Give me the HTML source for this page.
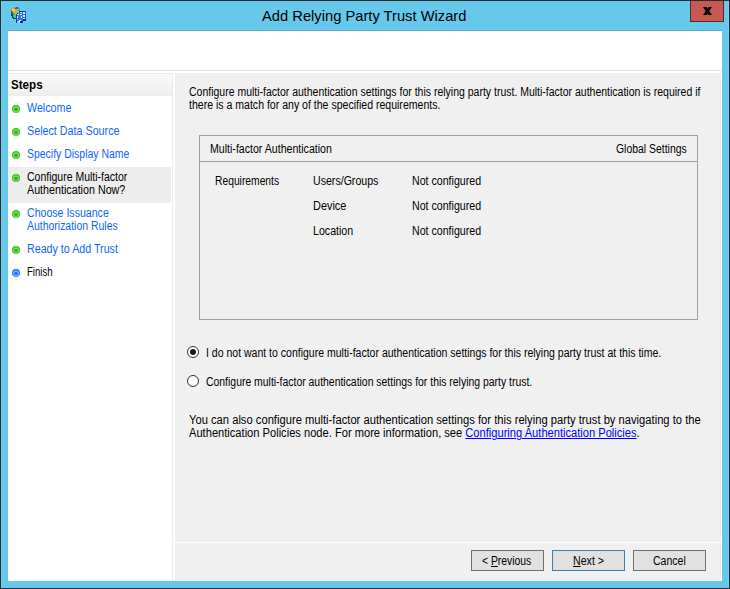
<!DOCTYPE html>
<html><head><meta charset="utf-8">
<style>
html,body{margin:0;padding:0;}
body{width:730px;height:589px;position:relative;overflow:hidden;background:#2b2b2b;font-family:"Liberation Sans",sans-serif;}
.a{position:absolute;}
.t{position:absolute;white-space:nowrap;font-size:12px;line-height:13px;color:#000;transform-origin:0 0;font-family:"Liberation Sans",sans-serif;}
.dot{position:absolute;left:12px;width:8px;height:8px;border-radius:50%;}
.dot.g{background:radial-gradient(circle at 50% 55%,#1fae10 0,#2ab818 1.2px,#8ddc6e 2.3px,#5fd040 3px,#38c416 3.6px);}
.dot.b{background:radial-gradient(circle at 50% 55%,#105ef0 0,#2a6cff 1.2px,#8cb8ff 2.3px,#5a94ff 3px,#1a66ff 3.6px);}
.lk{color:#0a66ff;}
.ul{color:#0000ff;text-decoration:underline;text-underline-offset:1px;}
.btn{position:absolute;top:550px;width:71px;height:19px;background:#e1e1e1;border:1px solid #707070;}
.radio{position:absolute;left:187px;width:10px;height:10px;border-radius:50%;border:1px solid #333;background:#fff;}
</style></head><body>
<div class="a" style="left:1px;top:1px;width:728px;height:587px;background:#66c8ea;"></div>
<!-- close -->
<div class="a" style="left:690px;top:1px;width:32px;height:20px;background:#c65a50;border:1px solid #5a2822;border-top:0;"></div>
<svg class="a" style="left:703px;top:7px" width="9" height="8" viewBox="0 0 9 8"><path d="M0 0 L3.7 0 L4.5 1.7 L5.3 0 L9 0 L6.3 4 L9 8 L5.3 8 L4.5 6.3 L3.7 8 L0 8 L2.7 4 Z" fill="#000"/></svg>
<!-- icon -->
<svg class="a" style="left:10px;top:7px" width="16" height="16" viewBox="0 0 16 16" shape-rendering="crispEdges"><rect x="4" y="0" width="2" height="1" fill="#4f9fe0"/><rect x="6" y="0" width="2" height="1" fill="#1f5fcf"/><rect x="8" y="0" width="1" height="1" fill="#4f9fe0"/><rect x="1" y="1" width="4" height="1" fill="#f2a01e"/><rect x="5" y="1" width="3" height="1" fill="#1f5fcf"/><rect x="8" y="1" width="2" height="1" fill="#4f9fe0"/><rect x="0" y="2" width="2" height="1" fill="#f2a01e"/><rect x="2" y="2" width="2" height="1" fill="#fbd27a"/><rect x="4" y="2" width="4" height="1" fill="#f2a01e"/><rect x="8" y="2" width="2" height="1" fill="#4f9fe0"/><rect x="0" y="3" width="1" height="1" fill="#f2a01e"/><rect x="1" y="3" width="1" height="1" fill="#1fb83a"/><rect x="2" y="3" width="3" height="1" fill="#fbd27a"/><rect x="5" y="3" width="3" height="1" fill="#f2a01e"/><rect x="8" y="3" width="1" height="1" fill="#4f9fe0"/><rect x="9" y="3" width="1" height="1" fill="#1fb83a"/><rect x="0" y="4" width="1" height="1" fill="#f2a01e"/><rect x="1" y="4" width="1" height="1" fill="#1f5fcf"/><rect x="2" y="4" width="1" height="1" fill="#1fb83a"/><rect x="3" y="4" width="1" height="1" fill="#fbd27a"/><rect x="4" y="4" width="4" height="1" fill="#f2a01e"/><rect x="9" y="4" width="7" height="1" fill="#0c3aa6"/><rect x="1" y="5" width="2" height="1" fill="#1f5fcf"/><rect x="3" y="5" width="4" height="1" fill="#f2a01e"/><rect x="9" y="5" width="1" height="1" fill="#1f5fcf"/><rect x="10" y="5" width="2" height="1" fill="#d6ebff"/><rect x="12" y="5" width="1" height="1" fill="#1f5fcf"/><rect x="13" y="5" width="2" height="1" fill="#d6ebff"/><rect x="15" y="5" width="1" height="1" fill="#1f5fcf"/><rect x="1" y="6" width="2" height="1" fill="#1f5fcf"/><rect x="3" y="6" width="1" height="1" fill="#1fb83a"/><rect x="4" y="6" width="2" height="1" fill="#f2a01e"/><rect x="7" y="6" width="1" height="1" fill="#0c3aa6"/><rect x="8" y="6" width="5" height="1" fill="#2f78de"/><rect x="13" y="6" width="2" height="1" fill="#d6ebff"/><rect x="15" y="6" width="1" height="1" fill="#1f5fcf"/><rect x="1" y="7" width="2" height="1" fill="#0c3aa6"/><rect x="3" y="7" width="2" height="1" fill="#1fb83a"/><rect x="6" y="7" width="1" height="1" fill="#0c3aa6"/><rect x="7" y="7" width="2" height="1" fill="#d6ebff"/><rect x="9" y="7" width="1" height="1" fill="#2f78de"/><rect x="10" y="7" width="2" height="1" fill="#d6ebff"/><rect x="12" y="7" width="1" height="1" fill="#2f78de"/><rect x="13" y="7" width="3" height="1" fill="#1f5fcf"/><rect x="1" y="8" width="2" height="1" fill="#0c3aa6"/><rect x="3" y="8" width="3" height="1" fill="#2ee04a"/><rect x="6" y="8" width="1" height="1" fill="#0c3aa6"/><rect x="7" y="8" width="6" height="1" fill="#2f78de"/><rect x="13" y="8" width="2" height="1" fill="#d6ebff"/><rect x="15" y="8" width="1" height="1" fill="#1f5fcf"/><rect x="2" y="9" width="1" height="1" fill="#0c3aa6"/><rect x="3" y="9" width="3" height="1" fill="#2ee04a"/><rect x="6" y="9" width="1" height="1" fill="#0c3aa6"/><rect x="7" y="9" width="1" height="1" fill="#d6ebff"/><rect x="8" y="9" width="3" height="1" fill="#2f78de"/><rect x="11" y="9" width="1" height="1" fill="#d6ebff"/><rect x="12" y="9" width="1" height="1" fill="#2f78de"/><rect x="13" y="9" width="2" height="1" fill="#d6ebff"/><rect x="15" y="9" width="1" height="1" fill="#1f5fcf"/><rect x="2" y="10" width="2" height="1" fill="#0c3aa6"/><rect x="4" y="10" width="2" height="1" fill="#2ee04a"/><rect x="6" y="10" width="1" height="1" fill="#0c3aa6"/><rect x="7" y="10" width="1" height="1" fill="#d6ebff"/><rect x="8" y="10" width="3" height="1" fill="#2f78de"/><rect x="11" y="10" width="1" height="1" fill="#d6ebff"/><rect x="12" y="10" width="1" height="1" fill="#2f78de"/><rect x="13" y="10" width="3" height="1" fill="#1f5fcf"/><rect x="3" y="11" width="3" height="1" fill="#0c3aa6"/><rect x="6" y="11" width="7" height="1" fill="#2f78de"/><rect x="13" y="11" width="2" height="1" fill="#d6ebff"/><rect x="15" y="11" width="1" height="1" fill="#1f5fcf"/><rect x="6" y="12" width="1" height="1" fill="#0c3aa6"/><rect x="7" y="12" width="1" height="1" fill="#8fc6f2"/><rect x="8" y="12" width="5" height="1" fill="#2f78de"/><rect x="13" y="12" width="3" height="1" fill="#0a2f8a"/><rect x="6" y="13" width="1" height="1" fill="#0c3aa6"/><rect x="7" y="13" width="2" height="1" fill="#2f78de"/><rect x="9" y="13" width="2" height="1" fill="#d6ebff"/><rect x="11" y="13" width="2" height="1" fill="#2f78de"/><rect x="13" y="13" width="3" height="1" fill="#0a2f8a"/><rect x="6" y="14" width="1" height="1" fill="#0c3aa6"/><rect x="7" y="14" width="2" height="1" fill="#8fc6f2"/><rect x="9" y="14" width="1" height="1" fill="#d6ebff"/><rect x="10" y="14" width="3" height="1" fill="#0a2f8a"/><rect x="6" y="15" width="1" height="1" fill="#0c3aa6"/><rect x="7" y="15" width="2" height="1" fill="#8fc6f2"/><rect x="9" y="15" width="1" height="1" fill="#d6ebff"/><rect x="10" y="15" width="3" height="1" fill="#0a2f8a"/></svg>
<!-- content area -->
<div class="a" style="left:7px;top:30px;width:715px;height:1px;background:#62a8c8"></div>
<div class="a" style="left:1px;top:1px;width:1px;height:587px;background:#6ed2f2"></div>
<div class="a" style="left:728px;top:1px;width:1px;height:587px;background:#6ed2f2"></div>
<div class="a" style="left:8px;top:31px;width:714px;height:39px;background:#fff"></div>
<div class="a" style="left:8px;top:70px;width:714px;height:1px;background:#e6e6e6"></div>
<div class="a" style="left:8px;top:71px;width:714px;height:510px;background:#fff"></div>
<!-- steps panel -->
<div class="a" style="left:8px;top:73px;width:164px;height:1px;background:#ebebeb"></div>
<div class="a" style="left:8px;top:74px;width:164px;height:22px;background:linear-gradient(#fafafa,#ededed)"></div>
<div class="a" style="left:172px;top:73px;width:1px;height:508px;background:#ececec"></div>
<div class="a" style="left:8px;top:167px;width:163px;height:36px;background:#ededed"></div>
<!-- dots -->
<div class="dot g" style="top:105px"></div>
<div class="dot g" style="top:128px"></div>
<div class="dot g" style="top:151px"></div>
<div class="dot g" style="top:174px"></div>
<div class="dot g" style="top:210px"></div>
<div class="dot g" style="top:246px"></div>
<div class="dot b" style="top:269px"></div>
<!-- content panel -->
<div class="a" style="left:175px;top:73px;width:546px;height:469px;background:#f0f0f0"></div>
<div class="a" style="left:175px;top:543px;width:546px;height:38px;background:#f0f0f0"></div>
<!-- table box -->
<div class="a" style="left:199px;top:135px;width:497px;height:183px;border:1px solid #a0a0a0;"></div>
<div class="a" style="left:200px;top:161px;width:497px;height:1px;background:#a0a0a0"></div>
<!-- radios -->
<div class="radio" style="top:346px"></div>
<div class="a" style="left:190px;top:349px;width:6px;height:6px;border-radius:50%;background:#1a1a1a"></div>
<div class="radio" style="top:375px"></div>
<!-- buttons -->
<div class="btn" style="left:471px"></div>
<div class="btn" style="left:552px;border-color:#3c7fb1"></div>
<div class="btn" style="left:633px"></div>
<div class="t " style="left:11.2px;top:79px;font-weight:bold;transform:scaleX(0.9667)">Steps</div>
<div class="t lk" style="left:27.1px;top:102px;transform:scaleX(0.8916)">Welcome</div>
<div class="t lk" style="left:27.1px;top:125px;transform:scaleX(0.8947)">Select Data Source</div>
<div class="t lk" style="left:27.1px;top:148px;transform:scaleX(0.8716)">Specify Display Name</div>
<div class="t " style="left:26.6px;top:171px;transform:scaleX(0.8743)">Configure Multi-factor</div>
<div class="t " style="left:26.6px;top:184px;transform:scaleX(0.8930)">Authentication Now?</div>
<div class="t lk" style="left:26.6px;top:207px;transform:scaleX(0.8821)">Choose Issuance</div>
<div class="t lk" style="left:26.6px;top:220px;transform:scaleX(0.8716)">Authorization Rules</div>
<div class="t lk" style="left:27.4px;top:243px;transform:scaleX(0.8906)">Ready to Add Trust</div>
<div class="t " style="left:27.4px;top:266px;transform:scaleX(0.7965)">Finish</div>
<div class="t " style="left:189.3px;top:86px;transform:scaleX(0.8743)">Configure multi-factor authentication settings for this relying party trust. Multi-factor authentication is required if</div>
<div class="t " style="left:189.3px;top:99px;transform:scaleX(0.8785)">there is a match for any of the specified requirements.</div>
<div class="t " style="left:209.5px;top:143px;transform:scaleX(0.8828)">Multi-factor Authentication</div>
<div class="t " style="left:615.6px;top:143px;transform:scaleX(0.8687)">Global Settings</div>
<div class="t " style="left:215.2px;top:175px;transform:scaleX(0.8581)">Requirements</div>
<div class="t " style="left:313.2px;top:175px;transform:scaleX(0.8834)">Users/Groups</div>
<div class="t " style="left:313.2px;top:200px;transform:scaleX(0.9104)">Device</div>
<div class="t " style="left:313.2px;top:225px;transform:scaleX(0.8860)">Location</div>
<div class="t " style="left:412.3px;top:175px;transform:scaleX(0.8854)">Not configured</div>
<div class="t " style="left:412.3px;top:200px;transform:scaleX(0.8854)">Not configured</div>
<div class="t " style="left:412.3px;top:225px;transform:scaleX(0.8854)">Not configured</div>
<div class="t " style="left:206.3px;top:347px;transform:scaleX(0.8761)">I do not want to configure multi-factor authentication settings for this relying party trust at this time.</div>
<div class="t " style="left:205.7px;top:376px;transform:scaleX(0.8687)">Configure multi-factor authentication settings for this relying party trust.</div>
<div class="t " style="left:189.0px;top:414px;transform:scaleX(0.9329)">You can also configure multi-factor authentication settings for this relying party trust by navigating to the</div>
<div class="t " style="left:189.0px;top:427px;transform:scaleX(0.9268)">Authentication Policies node. For more information, see <span class="ul">Configuring Authentication Policies</span>.</div>
<div class="t " style="left:482.3px;top:555px;transform:scaleX(0.8642)">&lt; <u>P</u>revious</div>
<div class="t " style="left:573.4px;top:555px;transform:scaleX(0.8849)"><u>N</u>ext &gt;</div>
<div class="t " style="left:652.6px;top:555px;transform:scaleX(0.8780)">Cancel</div>
<div class="t " style="left:262.3px;top:7px;font-size:15px;line-height:17px;color:#000;transform:scaleX(0.9808)">Add Relying Party Trust Wizard</div>
</body></html>
